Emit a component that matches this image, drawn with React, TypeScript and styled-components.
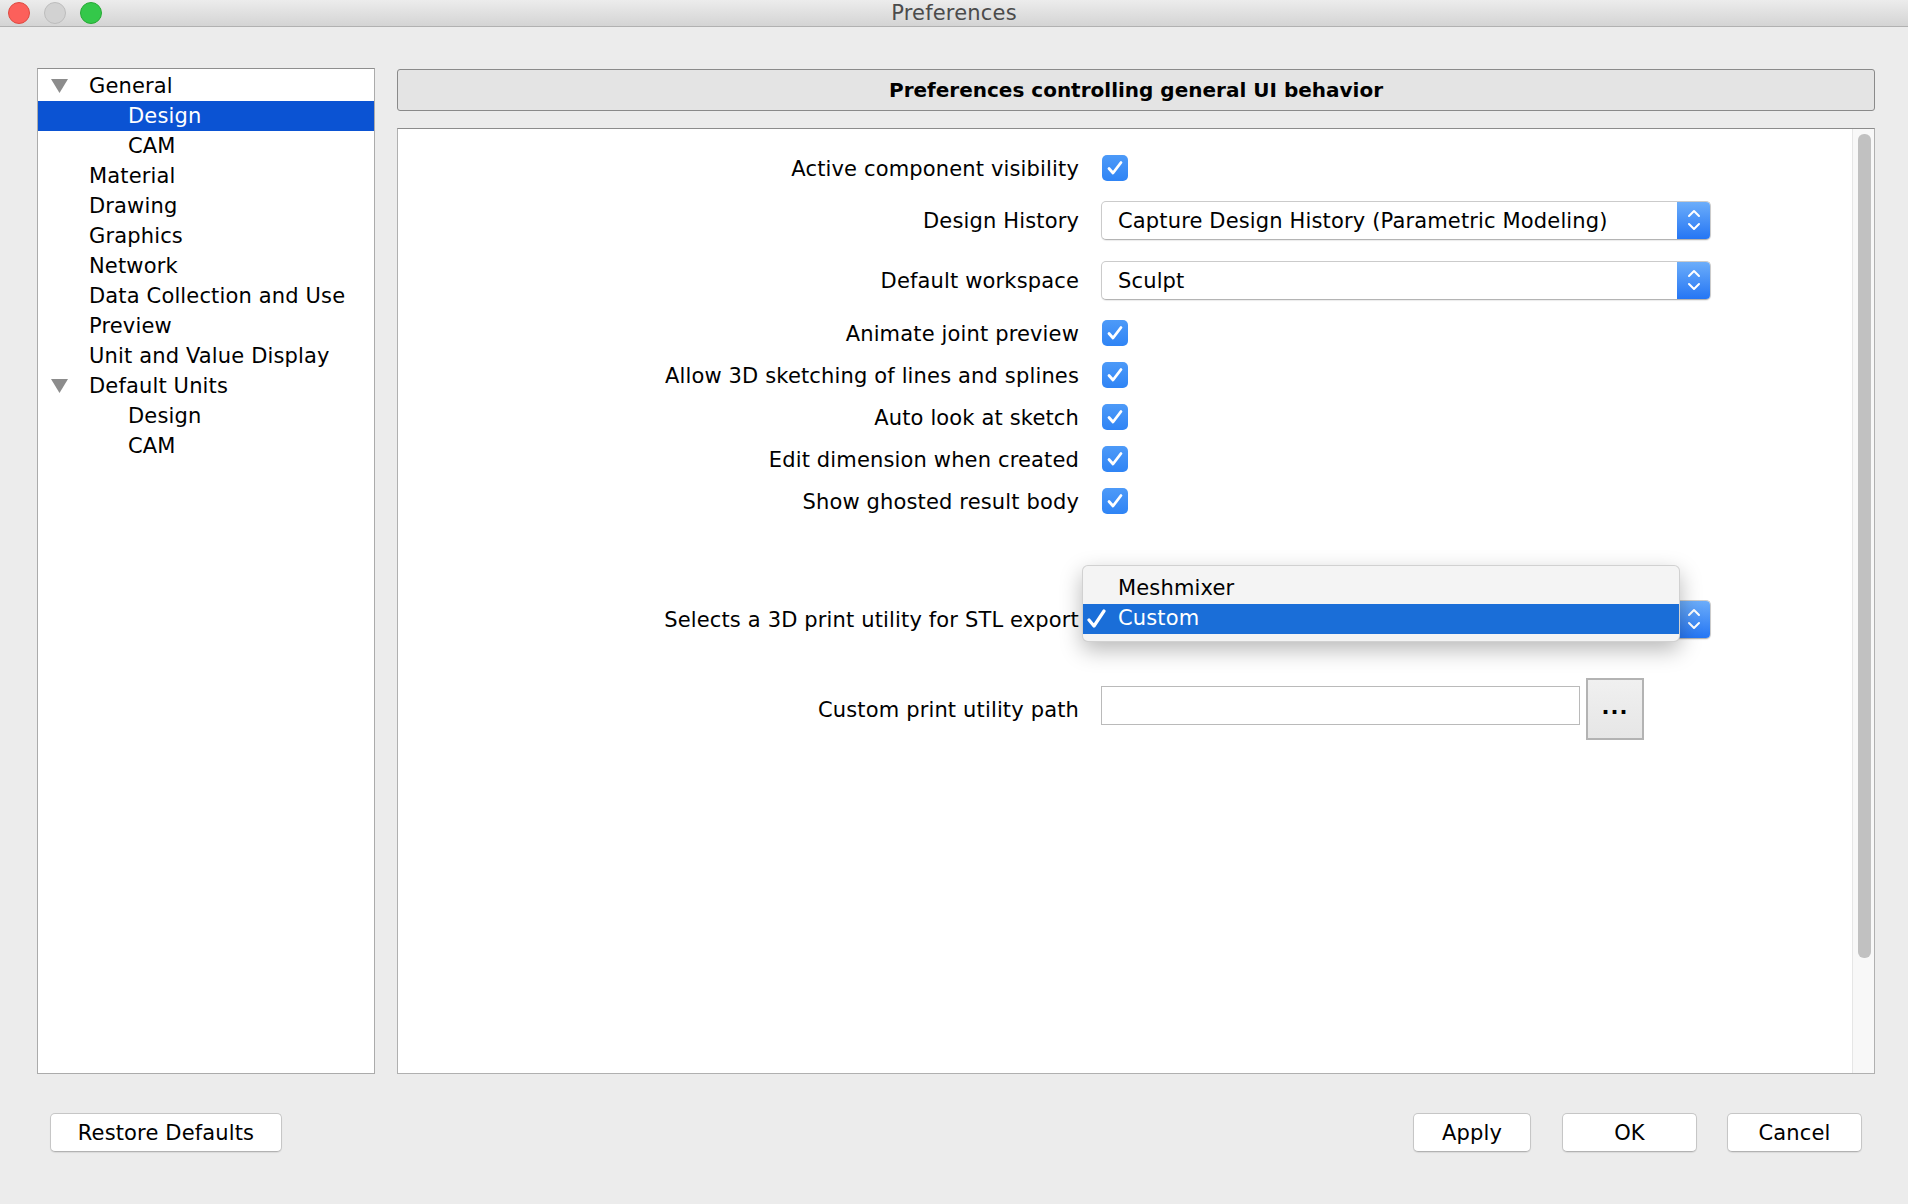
import React from "react";
import styled, { createGlobalStyle } from "styled-components";

const GlobalStyle = createGlobalStyle`
  html, body {
    margin: 0;
    padding: 0;
    background: #ececec;
  }
  body {
    font-family: "DejaVu Sans", "Liberation Sans", sans-serif;
    font-size: 21px;
    letter-spacing: 0.15px;
    color: #000;
  }
  * { box-sizing: border-box; }
`;

const Window = styled.div`
  width: 1908px;
  height: 1204px;
  display: flex;
  flex-direction: column;
  background: #ececec;
  overflow: hidden;
`;

const TitleBar = styled.div`
  height: 27px;
  flex: none;
  display: grid;
  grid-template-columns: 1fr auto 1fr;
  align-items: center;
  background: linear-gradient(#ececec, #d4d4d4);
  border-bottom: 1px solid #b1b1b1;
`;

const Lights = styled.div`
  display: flex;
  gap: 14px;
  padding-left: 8px;
`;

const Light = styled.span<{ $fill: string; $edge: string }>`
  width: 22px;
  height: 22px;
  border-radius: 50%;
  background: ${(p) => p.$fill};
  border: 1px solid ${(p) => p.$edge};
`;

const Title = styled.div`
  font-size: 21px;
  letter-spacing: 0.2px;
  color: #4b4b4b;
  line-height: 1;
`;

const Main = styled.div`
  display: flex;
  padding: 41px 33px 0 37px;
  height: 1047px;
  flex: none;
`;

const Tree = styled.div`
  width: 338px;
  height: 1006px;
  flex: none;
  background: #fff;
  border: 1px solid #ababab;
  border-top-color: #8e8e8e;
  padding-top: 2px;
`;

const TreeRow = styled.div<{ $selected?: boolean }>`
  height: 30px;
  display: flex;
  align-items: center;
  padding-left: 13px;
  background: ${(p) => (p.$selected ? "#0b53d3" : "transparent")};
  color: ${(p) => (p.$selected ? "#fff" : "#000")};
`;

const Toggle = styled.span`
  width: 38px;
  flex: none;
  display: flex;
  align-items: center;
`;

const TreeLabel = styled.span<{ $level: number }>`
  margin-left: ${(p) => p.$level * 39}px;
  line-height: 1;
  padding-top: 1px;
`;

const RightCol = styled.div`
  flex: 1;
  margin-left: 22px;
  display: flex;
  flex-direction: column;
`;

const Header = styled.div`
  height: 42px;
  margin-top: 1px;
  flex: none;
  background: #e4e4e4;
  border: 1px solid #8a8a8a;
  border-radius: 3px;
  display: flex;
  align-items: center;
  justify-content: center;
  font-weight: bold;
  font-size: 20px;
  letter-spacing: 0;
`;

const Panel = styled.div`
  margin-top: 17px;
  height: 946px;
  flex: none;
  background: #fff;
  border: 1px solid #b0b0b0;
  border-top-color: #8c8c8c;
  display: flex;
`;

const Form = styled.div`
  flex: 1;
  padding-top: 18px;
  display: flex;
  flex-direction: column;
`;

const Row = styled.div<{ $gap?: number }>`
  height: 42px;
  margin-top: ${(p) => p.$gap ?? 0}px;
  display: flex;
  align-items: center;
  flex: none;
`;

const Label = styled.div`
  width: 681px;
  text-align: right;
  padding-top: 2px;
  white-space: nowrap;
`;

const Control = styled.div`
  margin-left: 22px;
  display: flex;
  align-items: center;
  position: relative;
`;

const Check = styled.span`
  width: 26px;
  height: 26px;
  margin-left: 1px;
  border-radius: 5px;
  background: linear-gradient(#4d9af8, #2f84f5);
  display: flex;
  align-items: center;
  justify-content: center;
`;

const Combo = styled.div`
  width: 610px;
  height: 39px;
  background: #fff;
  border: 1px solid #cbcbcb;
  border-bottom-color: #b4b4b4;
  border-radius: 5px;
  box-shadow: 0 1px 1px rgba(0, 0, 0, 0.08);
  display: flex;
  align-items: center;
  overflow: hidden;
`;

const ComboText = styled.span`
  flex: 1;
  padding-left: 16px;
  padding-top: 1px;
  white-space: nowrap;
`;

const ComboArrow = styled.span`
  width: 33px;
  align-self: stretch;
  background: linear-gradient(#6cadfa, #2576f4);
  display: flex;
  align-items: center;
  justify-content: center;
`;

const Popup = styled.div`
  position: absolute;
  left: -19px;
  top: -35px;
  width: 598px;
  padding: 8px 0 7px;
  background: #f4f4f4;
  border: 1px solid rgba(0, 0, 0, 0.14);
  border-radius: 6px;
  box-shadow: 0 8px 22px rgba(0, 0, 0, 0.28);
  z-index: 2;
`;

const MenuItem = styled.div<{ $active?: boolean }>`
  height: 30px;
  display: flex;
  align-items: center;
  background: ${(p) => (p.$active ? "#1a6ed8" : "transparent")};
  color: ${(p) => (p.$active ? "#fff" : "#000")};
`;

const MenuMark = styled.span`
  width: 35px;
  flex: none;
  padding-left: 4px;
  display: flex;
  align-items: center;
`;

const MenuText = styled.span`
  padding-bottom: 2px;
`;

const TextField = styled.div`
  width: 479px;
  height: 39px;
  background: #fff;
  border: 1px solid #bababa;
  margin-top: -8px;
`;

const DotsButton = styled.div`
  width: 58px;
  height: 62px;
  margin-left: 6px;
  background: linear-gradient(#f0f0f0, #e6e6e6);
  border: 2px solid #b3b3b3;
  display: flex;
  align-items: center;
  justify-content: center;
  padding-bottom: 4px;
  font-weight: bold;
  letter-spacing: 1px;
`;

const Scrollbar = styled.div`
  width: 22px;
  flex: none;
  background: #f8f8f8;
  border-left: 1px solid #e6e6e6;
  padding: 5px 3px 0 5px;
`;

const Thumb = styled.div`
  height: 824px;
  border-radius: 6px;
  background: #c1c1c1;
`;

const Footer = styled.div`
  display: flex;
  align-items: center;
  padding: 39px 46px 0 50px;
`;

const Button = styled.div<{ $w: number; $gap?: number }>`
  width: ${(p) => p.$w}px;
  height: 39px;
  margin-left: ${(p) => p.$gap ?? 0}px;
  background: #fff;
  border: 1px solid #c6c6c6;
  border-bottom-color: #b2b2b2;
  border-radius: 5px;
  box-shadow: 0 1px 1px rgba(0, 0, 0, 0.08);
  display: flex;
  align-items: center;
  justify-content: center;
  padding-top: 1px;
`;

const Spacer = styled.div`
  flex: 1;
`;

const Triangle = () => (
  <svg width="17" height="14" viewBox="0 0 17 14">
    <path d="M0 0 H17 L8.5 14 Z" fill="#8c8c8c" />
  </svg>
);

const Tick = () => (
  <svg width="18" height="16" viewBox="0 0 18 16">
    <path d="M3 8.5 L7 13 L15 2.5" fill="none" stroke="#fff" strokeWidth="2.8" strokeLinecap="round" strokeLinejoin="round" />
  </svg>
);

const MenuTick = () => (
  <svg width="20" height="20" viewBox="0 0 20 20">
    <path d="M2 11 L7 17 L17 2" fill="none" stroke="#fff" strokeWidth="3.2" strokeLinecap="round" strokeLinejoin="round" />
  </svg>
);

const Chevrons = () => (
  <svg width="14" height="26" viewBox="0 0 14 26">
    <path d="M2 9 L7 4 L12 9 M2 17 L7 22 L12 17" fill="none" stroke="#fff" strokeWidth="2" strokeLinecap="round" strokeLinejoin="round" />
  </svg>
);

type Node = { label: string; level: number; open?: boolean; selected?: boolean };

const tree: Node[] = [
  { label: "General", level: 0, open: true },
  { label: "Design", level: 1, selected: true },
  { label: "CAM", level: 1 },
  { label: "Material", level: 0 },
  { label: "Drawing", level: 0 },
  { label: "Graphics", level: 0 },
  { label: "Network", level: 0 },
  { label: "Data Collection and Use", level: 0 },
  { label: "Preview", level: 0 },
  { label: "Unit and Value Display", level: 0 },
  { label: "Default Units", level: 0, open: true },
  { label: "Design", level: 1 },
  { label: "CAM", level: 1 },
];

const CheckRow = ({ label, gap }: { label: string; gap?: number }) => (
  <Row $gap={gap}>
    <Label>{label}</Label>
    <Control>
      <Check>
        <Tick />
      </Check>
    </Control>
  </Row>
);

const ComboRow = ({ label, value, gap }: { label: string; value: string; gap?: number }) => (
  <Row $gap={gap}>
    <Label>{label}</Label>
    <Control>
      <Combo>
        <ComboText>{value}</ComboText>
        <ComboArrow>
          <Chevrons />
        </ComboArrow>
      </Combo>
    </Control>
  </Row>
);

export default function App() {
  return (
    <Window>
      <GlobalStyle />
      <TitleBar>
        <Lights>
          <Light $fill="#fc605b" $edge="#de4a41" />
          <Light $fill="#d2d2d2" $edge="#bdbdbd" />
          <Light $fill="#34c84a" $edge="#27aa35" />
        </Lights>
        <Title>Preferences</Title>
        <div />
      </TitleBar>

      <Main>
        <Tree>
          {tree.map((n, i) => (
            <TreeRow key={i} $selected={n.selected}>
              <Toggle>{n.open && <Triangle />}</Toggle>
              <TreeLabel $level={n.level}>{n.label}</TreeLabel>
            </TreeRow>
          ))}
        </Tree>

        <RightCol>
          <Header>Preferences controlling general UI behavior</Header>
          <Panel>
            <Form>
              <CheckRow label="Active component visibility" />
              <ComboRow label="Design History" value="Capture Design History (Parametric Modeling)" gap={10} />
              <ComboRow label="Default workspace" value="Sculpt" gap={18} />
              <CheckRow label="Animate joint preview" gap={11} />
              <CheckRow label="Allow 3D sketching of lines and splines" />
              <CheckRow label="Auto look at sketch" />
              <CheckRow label="Edit dimension when created" />
              <CheckRow label="Show ghosted result body" />

              <Row $gap={76}>
                <Label>Selects a 3D print utility for STL export</Label>
                <Control>
                  <Combo>
                    <ComboText>Custom</ComboText>
                    <ComboArrow>
                      <Chevrons />
                    </ComboArrow>
                  </Combo>
                  <Popup>
                    <MenuItem>
                      <MenuMark />
                      <MenuText>Meshmixer</MenuText>
                    </MenuItem>
                    <MenuItem $active>
                      <MenuMark>
                        <MenuTick />
                      </MenuMark>
                      <MenuText>Custom</MenuText>
                    </MenuItem>
                  </Popup>
                </Control>
              </Row>

              <Row $gap={48}>
                <Label>Custom print utility path</Label>
                <Control>
                  <TextField />
                  <DotsButton>...</DotsButton>
                </Control>
              </Row>
            </Form>
            <Scrollbar>
              <Thumb />
            </Scrollbar>
          </Panel>
        </RightCol>
      </Main>

      <Footer>
        <Button $w={232}>Restore Defaults</Button>
        <Spacer />
        <Button $w={118}>Apply</Button>
        <Button $w={135} $gap={31}>OK</Button>
        <Button $w={135} $gap={30}>Cancel</Button>
      </Footer>
    </Window>
  );
}
